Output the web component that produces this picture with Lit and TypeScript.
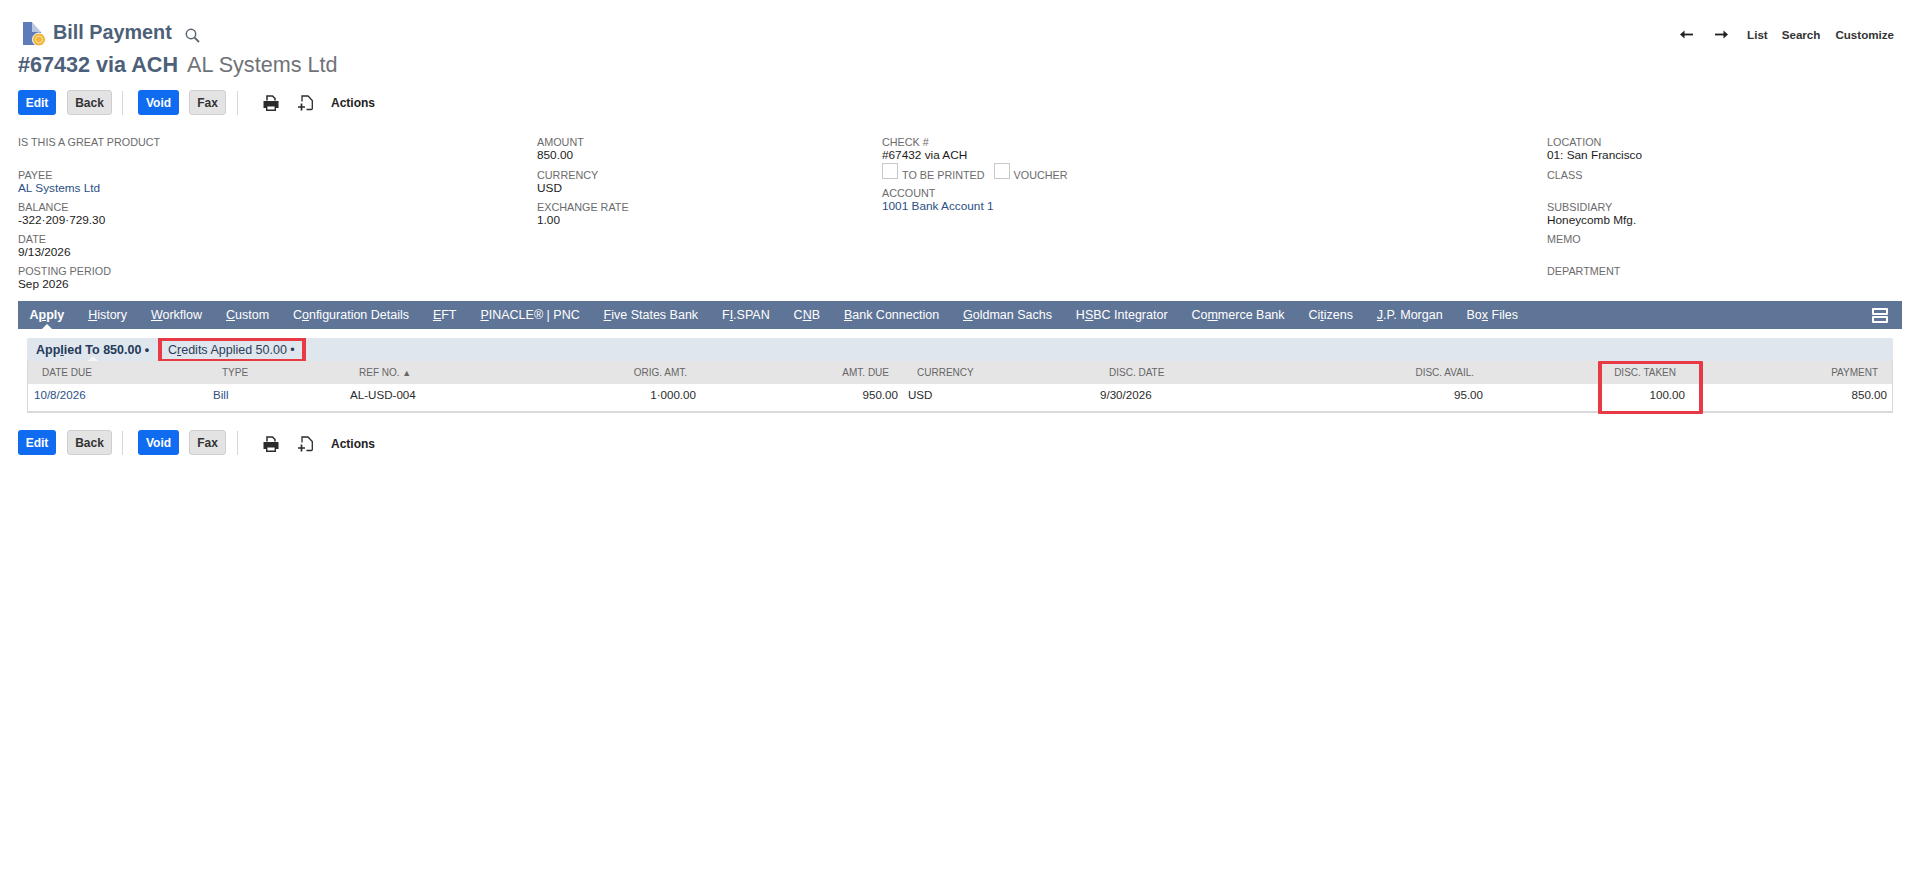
import { LitElement, html, css, svg } from "lit";
import { customElement } from "lit/decorators.js";

const u = (before: string, letter: string, after: string) => html`${before}<u>${letter}</u>${after}`;

const TABS: [string, string, string][] = [
  ["", "H", "istory"], ["", "W", "orkflow"], ["", "C", "ustom"], ["C", "o", "nfiguration Details"],
  ["", "E", "FT"], ["", "P", "INACLE® | PNC"], ["", "F", "ive States Bank"], ["F", "I", ".SPAN"],
  ["C", "N", "B"], ["", "B", "ank Connection"], ["", "G", "oldman Sachs"], ["H", "S", "BC Integrator"],
  ["Co", "m", "merce Bank"], ["Ci", "t", "izens"], ["", "J", ".P. Morgan"], ["Bo", "x", " Files"],
];

const printer = svg`<svg class="ico print" width="16" height="16" viewBox="0 0 16 16"><path d="M4 5.500V1h5.500L12 3.500v2" fill="none" stroke="#2b2b2b" stroke-width="1.500"/><path d="M0.500 6h15v7H13v-3H3v3H0.500z" fill="#2b2b2b"/><path d="M3.700 10.700h8.600v4.500H3.700z" fill="#fff" stroke="#2b2b2b" stroke-width="1.400"/></svg>`;
const newPage = svg`<svg class="ico" width="15" height="16" viewBox="0 0 15 16"><path d="M4 6.500V1h6l4.300 4.500V13.500a1 1 0 0 1-1 1H8.500" fill="none" stroke="#2b2b2b" stroke-width="1.300"/><path d="M0 12h7M3.500 8.500v7" stroke="#2b2b2b" stroke-width="1.700"/></svg>`;

@customElement("app-root")
export class AppRoot extends LitElement {
  static styles = css`
    :host { display: block; min-height: 876px; background: #fff; font-family: "Liberation Sans", Arial, sans-serif; color: #222; }
    .page { padding: 21px 18px 0; }
    .head { display: flex; justify-content: space-between; align-items: flex-start; height: 24px; }
    .title { display: flex; align-items: center; height: 24px; padding-left: 4px; }
    .title h1 { margin: -2px 0 0 7px; font-size: 19.800px; line-height: 22px; font-weight: 700; color: #4d5f79; }
    .title .search { margin: 5px 0 0 13px; }
    .nav { display: flex; align-items: center; height: 26px; font-size: 11.600px; font-weight: 700; color: #333; padding-right: 8px; }
    .nav svg { display: block; }
    .nav .n1 { margin-right: 22px; }
    .nav .n2 { margin-right: 19px; }
    .nav .n3 { margin-right: 14px; }
    .nav .n4 { margin-right: 15px; }
    .rec { margin-top: 7px; display: flex; align-items: center; height: 26px; font-size: 21.600px; line-height: 26px; gap: 9px; }
    .rec b { color: #4d5f79; }
    .rec span { color: #6f7378; }
    .bar { display: flex; align-items: center; height: 25px; font-size: 12px; font-weight: 700; }
    .bar.top { margin-top: 12px; }
    .bar.bottom { margin-top: 17px; }
    .bar.bottom .ico, .bar.bottom .act { margin-top: 3px; }
    .btn { height: 25px; box-sizing: border-box; border-radius: 3px; display: flex; align-items: center; justify-content: center; }
    .primary { background: #0f6bf0; color: #fff; }
    .secondary { background: #e3e3e3; color: #333; border: 1px solid #cfcfcf; }
    .w-edit { width: 38px; margin-right: 11px; }
    .w-back { width: 45px; margin-right: 10px; }
    .w-void { width: 41px; margin-right: 10px; }
    .w-fax { width: 37px; margin-right: 11px; }
    .sep { width: 1px; height: 24px; background: #d6d6d6; margin-right: 15px; }
    .sep.last { margin-right: 25px; }
    .ico { display: block; }
    .ico.print { margin-right: 19px; }
    .act { margin-left: 18px; font-size: 12px; color: #222; }

    .fields { display: grid; grid-template-columns: 519px 345px 665px 1fr; margin-top: 21px; height: 166px; font-size: 11.800px; line-height: 13px; }
    .f { height: 26px; margin-bottom: 6px; }
    .f.first { margin-bottom: 7px; }
    .l { color: #6b6b6b; text-transform: uppercase; height: 13px; font-size: 10.800px; }
    .v { color: #1c1c1c; height: 13px; }
    a { color: #2b4f85; text-decoration: none; }
    .f.check { margin-bottom: 0; }
    .checks { display: flex; align-items: flex-end; height: 16px; margin: 1px 0 8px; color: #6b6b6b; font-size: 10.800px; }
    .box { width: 16px; height: 16px; box-sizing: border-box; border: 1px solid #c9c9c9; margin-right: 4px; }
    .checks span { margin-right: 9px; line-height: 13px; margin-bottom: -3px; }

    .tabs { display: flex; align-items: center; height: 28px; background: #5f7598; color: #fff; font-size: 12.500px; padding-left: 11.500px; gap: 23.900px; position: relative; margin-top: -1px; }
    .tabs .on { font-weight: 700; position: relative; align-self: stretch; display: flex; align-items: center; }
    .on::after { content: ""; position: absolute; left: 50%; bottom: 0; margin-left: -5px; border: 5px solid transparent; border-top: 0; border-bottom-color: #fff; }
    .burger { margin-left: auto; margin-right: 14px; display: flex; flex-direction: column; gap: 1px; }
    .burger i { display: block; width: 16px; height: 7px; box-sizing: border-box; border: 2px solid #fff; border-radius: 1px; }

    .panel { margin: 9px 9px 0; }
    .subs { height: 23px; background: #dfe6ed; display: flex; align-items: center; font-size: 12.500px; color: #243a5a; padding-left: 9px; border-radius: 2px 2px 0 0; }
    .sub1 { font-weight: 700; align-self: stretch; display: flex; align-items: center; position: relative; width: 122px; }
    .sub1::after { content: ""; position: absolute; left: 52px; bottom: 0; border: 5px solid transparent; border-top: 0; border-bottom-color: #f4f6f8; }
    .sub2 { box-sizing: border-box; width: 148px; height: 24px; margin-top: 1px; border-style: solid; border-color: #e83a45; border-width: 3px 4px; display: flex; align-items: center; padding-left: 6px; color: #2a3d59; }
    .tbl { position: relative; border: 1px solid #d9d9d9; border-top: 0; border-bottom-width: 2px; height: 50px; display: grid; grid-template-columns: 178px 137px 157px 203px 198px 192px 157px 240px 202px 1fr; grid-template-rows: 23px 27px; align-items: center; font-size: 11.600px; }
    .h { background: #e5e5e5; color: #666; font-size: 10px; height: 23px; line-height: 24px; }
    .d { color: #2b2b2b; line-height: 13px; padding-bottom: 7px; }
    .hl { padding-left: 16px; }
    .dl { padding-left: 7px; }
    .h.c1 { padding-left: 14px; }
    .d.c1 { padding-left: 6px; }
    .r { text-align: right; }
    .hr { padding-right: 16px; }
    .dr { padding-right: 7px; }
    .h.amt { padding-right: 12px; }
    .d.amt { padding-right: 3px; }
    .h.pay { padding-right: 14px; }
    .d.pay { padding-right: 5px; }
    .arrow { font-size: 9px; color: #666; }
    .mark { position: absolute; left: 1570px; top: 0; width: 105px; height: 53px; box-sizing: border-box; border-style: solid; border-color: #e83a45; border-width: 3px 4px; border-radius: 1px; }
  `;

  private field(label: string, value?: unknown, first = false) {
    return html`<div class="f ${first ? "first" : ""}"><div class="l">${label}</div><div class="v">${value ?? ""}</div></div>`;
  }

  private actions(pos: string) {
    return html`<div class="bar ${pos}">
      <div class="btn primary w-edit">Edit</div>
      <div class="btn secondary w-back">Back</div>
      <div class="sep"></div>
      <div class="btn primary w-void">Void</div>
      <div class="btn secondary w-fax">Fax</div>
      <div class="sep last"></div>
      ${printer}${newPage}
      <span class="act">Actions</span>
    </div>`;
  }

  render() {
    return html`<div class="page">
      <div class="head">
        <div class="title">
          <svg width="24" height="25" viewBox="0 0 24 25"><path d="M1 1H10V11H19V24H1z" fill="#5d7cb8"/><path d="M10 1l9 10h-9z" fill="#b9c8e2"/><circle cx="17" cy="18.500" r="6.500" fill="#f0b53a" stroke="#fff" stroke-width="1"/><circle cx="17" cy="18.500" r="3.500" fill="none" stroke="#fbe3a6" stroke-width="1"/></svg>
          <h1>Bill Payment</h1>
          <svg class="search" width="15" height="15" viewBox="0 0 15 15"><circle cx="6" cy="6" r="4.700" fill="none" stroke="#5b6573" stroke-width="1.500"/><path d="M9.500 9.500l4.500 4.500" stroke="#5b6573" stroke-width="1.800"/></svg>
        </div>
        <div class="nav">
          <svg class="n1" width="13" height="9" viewBox="0 0 13 9"><path d="M13 4.500H3" stroke="#222" stroke-width="1.800"/><path d="M0 4.500L4.500 0.500v8z" fill="#222"/></svg>
          <svg class="n2" width="13" height="9" viewBox="0 0 13 9"><path d="M0 4.500h10" stroke="#222" stroke-width="1.800"/><path d="M13 4.500L8.500 0.500v8z" fill="#222"/></svg>
          <span class="n3">List</span><span class="n4">Search</span><span>Customize</span>
        </div>
      </div>
      <div class="rec"><b>#67432 via ACH</b><span>AL Systems Ltd</span></div>
      ${this.actions("top")}
      <div class="fields">
        <div>
          ${this.field("Is this a great product", "", true)}
          ${this.field("Payee", html`<a>AL Systems Ltd</a>`)}
          ${this.field("Balance", "-322·209·729.30")}
          ${this.field("Date", "9/13/2026")}
          ${this.field("Posting Period", "Sep 2026")}
        </div>
        <div>
          ${this.field("Amount", "850.00", true)}
          ${this.field("Currency", "USD")}
          ${this.field("Exchange Rate", "1.00")}
        </div>
        <div>
          <div class="f check"><div class="l">Check #</div><div class="v">#67432 via ACH</div></div>
          <div class="checks"><div class="box"></div><span>TO BE PRINTED</span><div class="box"></div><span>VOUCHER</span></div>
          ${this.field("Account", html`<a>1001 Bank Account 1</a>`)}
        </div>
        <div>
          ${this.field("Location", "01: San Francisco", true)}
          ${this.field("Class")}
          ${this.field("Subsidiary", "Honeycomb Mfg.")}
          ${this.field("Memo")}
          ${this.field("Department")}
        </div>
      </div>
      <div class="tabs">
        <span class="on"><span>A<u>p</u>ply</span></span>
        ${TABS.map((t) => html`<span>${u(t[0], t[1], t[2])}</span>`)}
        <div class="burger"><i></i><i></i></div>
      </div>
      <div class="panel">
        <div class="subs">
          <div class="sub1"><span>App<u>l</u>ied To 850.00 •</span></div>
          <div class="sub2"><span>C<u>r</u>edits Applied 50.00 •</span></div>
        </div>
        <div class="tbl">
          <div class="h hl c1">DATE DUE</div>
          <div class="h hl">TYPE</div>
          <div class="h hl">REF NO. <span class="arrow">▲</span></div>
          <div class="h r hr">ORIG. AMT.</div>
          <div class="h r amt">AMT. DUE</div>
          <div class="h hl">CURRENCY</div>
          <div class="h hl">DISC. DATE</div>
          <div class="h r hr">DISC. AVAIL.</div>
          <div class="h r hr">DISC. TAKEN</div>
          <div class="h r pay">PAYMENT</div>
          <div class="d dl c1"><a>10/8/2026</a></div>
          <div class="d dl"><a>Bill</a></div>
          <div class="d dl">AL-USD-004</div>
          <div class="d r dr">1·000.00</div>
          <div class="d r amt">950.00</div>
          <div class="d dl">USD</div>
          <div class="d dl">9/30/2026</div>
          <div class="d r dr">95.00</div>
          <div class="d r dr">100.00</div>
          <div class="d r pay">850.00</div>
          <div class="mark"></div>
        </div>
      </div>
      ${this.actions("bottom")}
    </div>`;
  }
}
